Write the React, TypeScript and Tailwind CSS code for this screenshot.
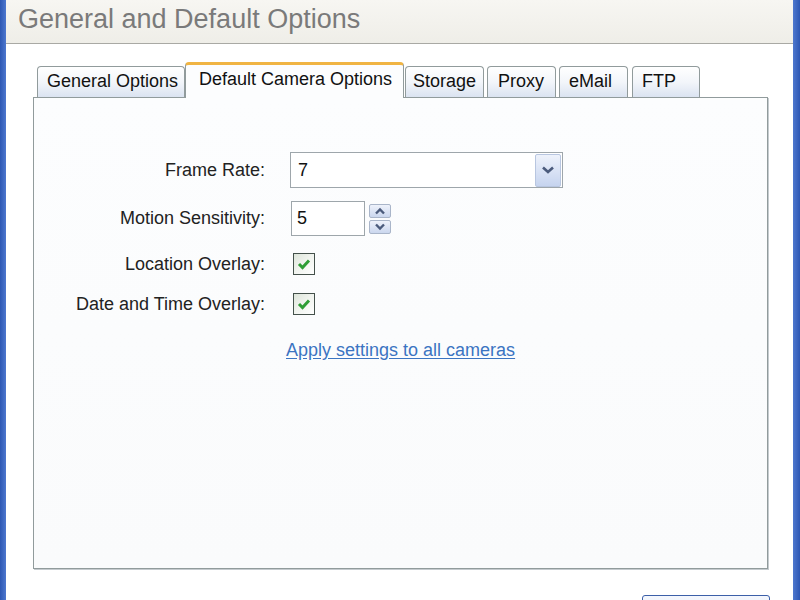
import React from 'react';

const tabs = [
    { label: 'General Options', w: 'w-[148px]', pl: 'pl-[9px]', ml: 'ml-[4px]' },
    { label: 'Default Camera Options', w: 'w-[219px]', pl: 'pl-[13px]', ml: 'ml-0', active: true },
    { label: 'Storage', w: 'w-[79px]', pl: 'pl-[7px]', ml: 'ml-[1px]' },
    { label: 'Proxy', w: 'w-[69px]', pl: 'pl-[10px]', ml: 'ml-[3px]' },
    { label: 'eMail', w: 'w-[69px]', pl: 'pl-[9px]', ml: 'ml-[3px]' },
    { label: 'FTP', w: 'w-[68px]', pl: 'pl-[9px]', ml: 'ml-[4px]' },
];

const Check = () => (
    <div className="ml-[3px] w-[22px] h-[22px] border border-[#44514b] bg-gradient-to-br from-[#dde5da] via-[#f1f4ef] to-white flex items-center justify-center">
        <svg width="18" height="18" viewBox="0 0 18 18">
            <path d="M4 9 L7.5 12.5 L14 5.5" fill="none" stroke="#2f9e35" strokeWidth="3" />
        </svg>
    </div>
);

const SpinButton = ({ up }: { up?: boolean }) => (
    <div className="w-[22px] h-[14px] border border-[#a9b5c9] rounded-[2px] bg-gradient-to-b from-[#eef2fb] to-[#cbd7ee] flex items-center justify-center">
        <svg width="12" height="8" viewBox="0 0 12 8">
            <path d={up ? 'M2 6.5 L6 2.5 L10 6.5' : 'M2 1.5 L6 5.5 L10 1.5'} fill="none" stroke="#4b5b7c" strokeWidth="2.4" />
        </svg>
    </div>
);

const App = () => {
    return (
        <div className="w-[800px] h-[600px] overflow-hidden flex bg-white font-['Liberation_Sans',Arial,sans-serif]">
            {/* window frame left */}
            <div className="w-[6px] bg-gradient-to-r from-[#2d57b3] to-[#4e78cf]" />

            <div className="flex-1 flex flex-col min-w-0">
                {/* Title */}
                <div className="h-[44px] shrink-0 border-b border-[#a9a9a4] bg-gradient-to-b from-[#f7f6f2] to-[#efeee8] pl-[12px]">
                    <div className="text-[27px] leading-[38px] text-[#7a7a7a]">General and Default Options</div>
                </div>

                <div className="pl-[27px] pt-[18px] flex flex-col">
                    {/* Tabs */}
                    <div className="flex items-end h-[36px]">
                        {tabs.map((t) =>
                            t.active ? (
                                <div
                                    key={t.label}
                                    className={`relative z-10 ${t.ml} ${t.w} ${t.pl} h-[36px] pt-[4px] border-x border-t-[3px] border-x-[#919b9c] border-t-[#f0b443] rounded-t-[4px] bg-[#fcfdfe] text-[18px] leading-[20px] text-[#111]`}
                                >
                                    {t.label}
                                </div>
                            ) : (
                                <div
                                    key={t.label}
                                    className={`${t.ml} ${t.w} ${t.pl} h-[32px] pt-[4px] border border-b-0 border-[#919b9c] rounded-t-[4px] bg-gradient-to-b from-white via-[#f2f5fa] to-[#d9e2f0] text-[18px] leading-[20px] text-[#111]`}
                                >
                                    {t.label}
                                </div>
                            )
                        )}
                    </div>

                    {/* Panel */}
                    <div className="-mt-px w-[735px] h-[472px] border border-[#919b9c] bg-gradient-to-b from-[#fcfdfe] to-[#fafbfc] shadow-[1px_1px_0_#c5cbcf] pt-[54px] flex flex-col text-[18px] text-[#222]">
                        <div className="flex items-center h-[36px]">
                            <div className="w-[231px] text-right">Frame Rate:</div>
                            <div className="ml-[25px] w-[273px] h-[36px] border border-[#9ea6ab] bg-white flex items-center">
                                <div className="flex-1 pl-[7px] text-[#111]">7</div>
                                <div className="w-[26px] h-[33px] mr-px border border-[#b8c6e0] rounded-[2px] bg-gradient-to-b from-[#eef2fb] to-[#c6d4ef] flex items-center justify-center">
                                    <svg width="14" height="10" viewBox="0 0 14 10">
                                        <path d="M2 2.5 L7 7 L12 2.5" fill="none" stroke="#4b5b7c" strokeWidth="2.6" />
                                    </svg>
                                </div>
                            </div>
                        </div>

                        <div className="flex items-center h-[35px] mt-[13px]">
                            <div className="w-[231px] text-right">Motion Sensitivity:</div>
                            <div className="ml-[26px] w-[74px] h-[35px] border border-[#9ea6ab] bg-white pl-[5px] flex items-center text-[#111]">5</div>
                            <div className="ml-[4px] flex flex-col gap-[2px]">
                                <SpinButton up />
                                <SpinButton />
                            </div>
                        </div>

                        <div className="flex items-center h-[32px] mt-[12px]">
                            <div className="w-[231px] text-right">Location Overlay:</div>
                            <div className="ml-[25px]">
                                <Check />
                            </div>
                        </div>

                        <div className="flex items-center h-[32px] mt-[8px]">
                            <div className="w-[231px] text-right">Date and Time Overlay:</div>
                            <div className="ml-[25px]">
                                <Check />
                            </div>
                        </div>

                        <div className="mt-[19px] pl-[252px] leading-[22px]">
                            <a href="#" className="text-[#3b74c2] underline underline-offset-2">Apply settings to all cameras</a>
                        </div>
                    </div>

                    {/* Bottom button */}
                    <div className="flex mt-[26px] pl-[609px]">
                        <div className="w-[128px] h-[30px] border border-[#3c5fa8] rounded-[3px] bg-gradient-to-b from-[#f4f7fd] to-[#e3e9f5]" />
                    </div>
                </div>
            </div>

            {/* window frame right */}
            <div className="w-[7px] bg-gradient-to-r from-[#4e78cf] to-[#2d57b3]" />
        </div>
    );
};

export default App;
